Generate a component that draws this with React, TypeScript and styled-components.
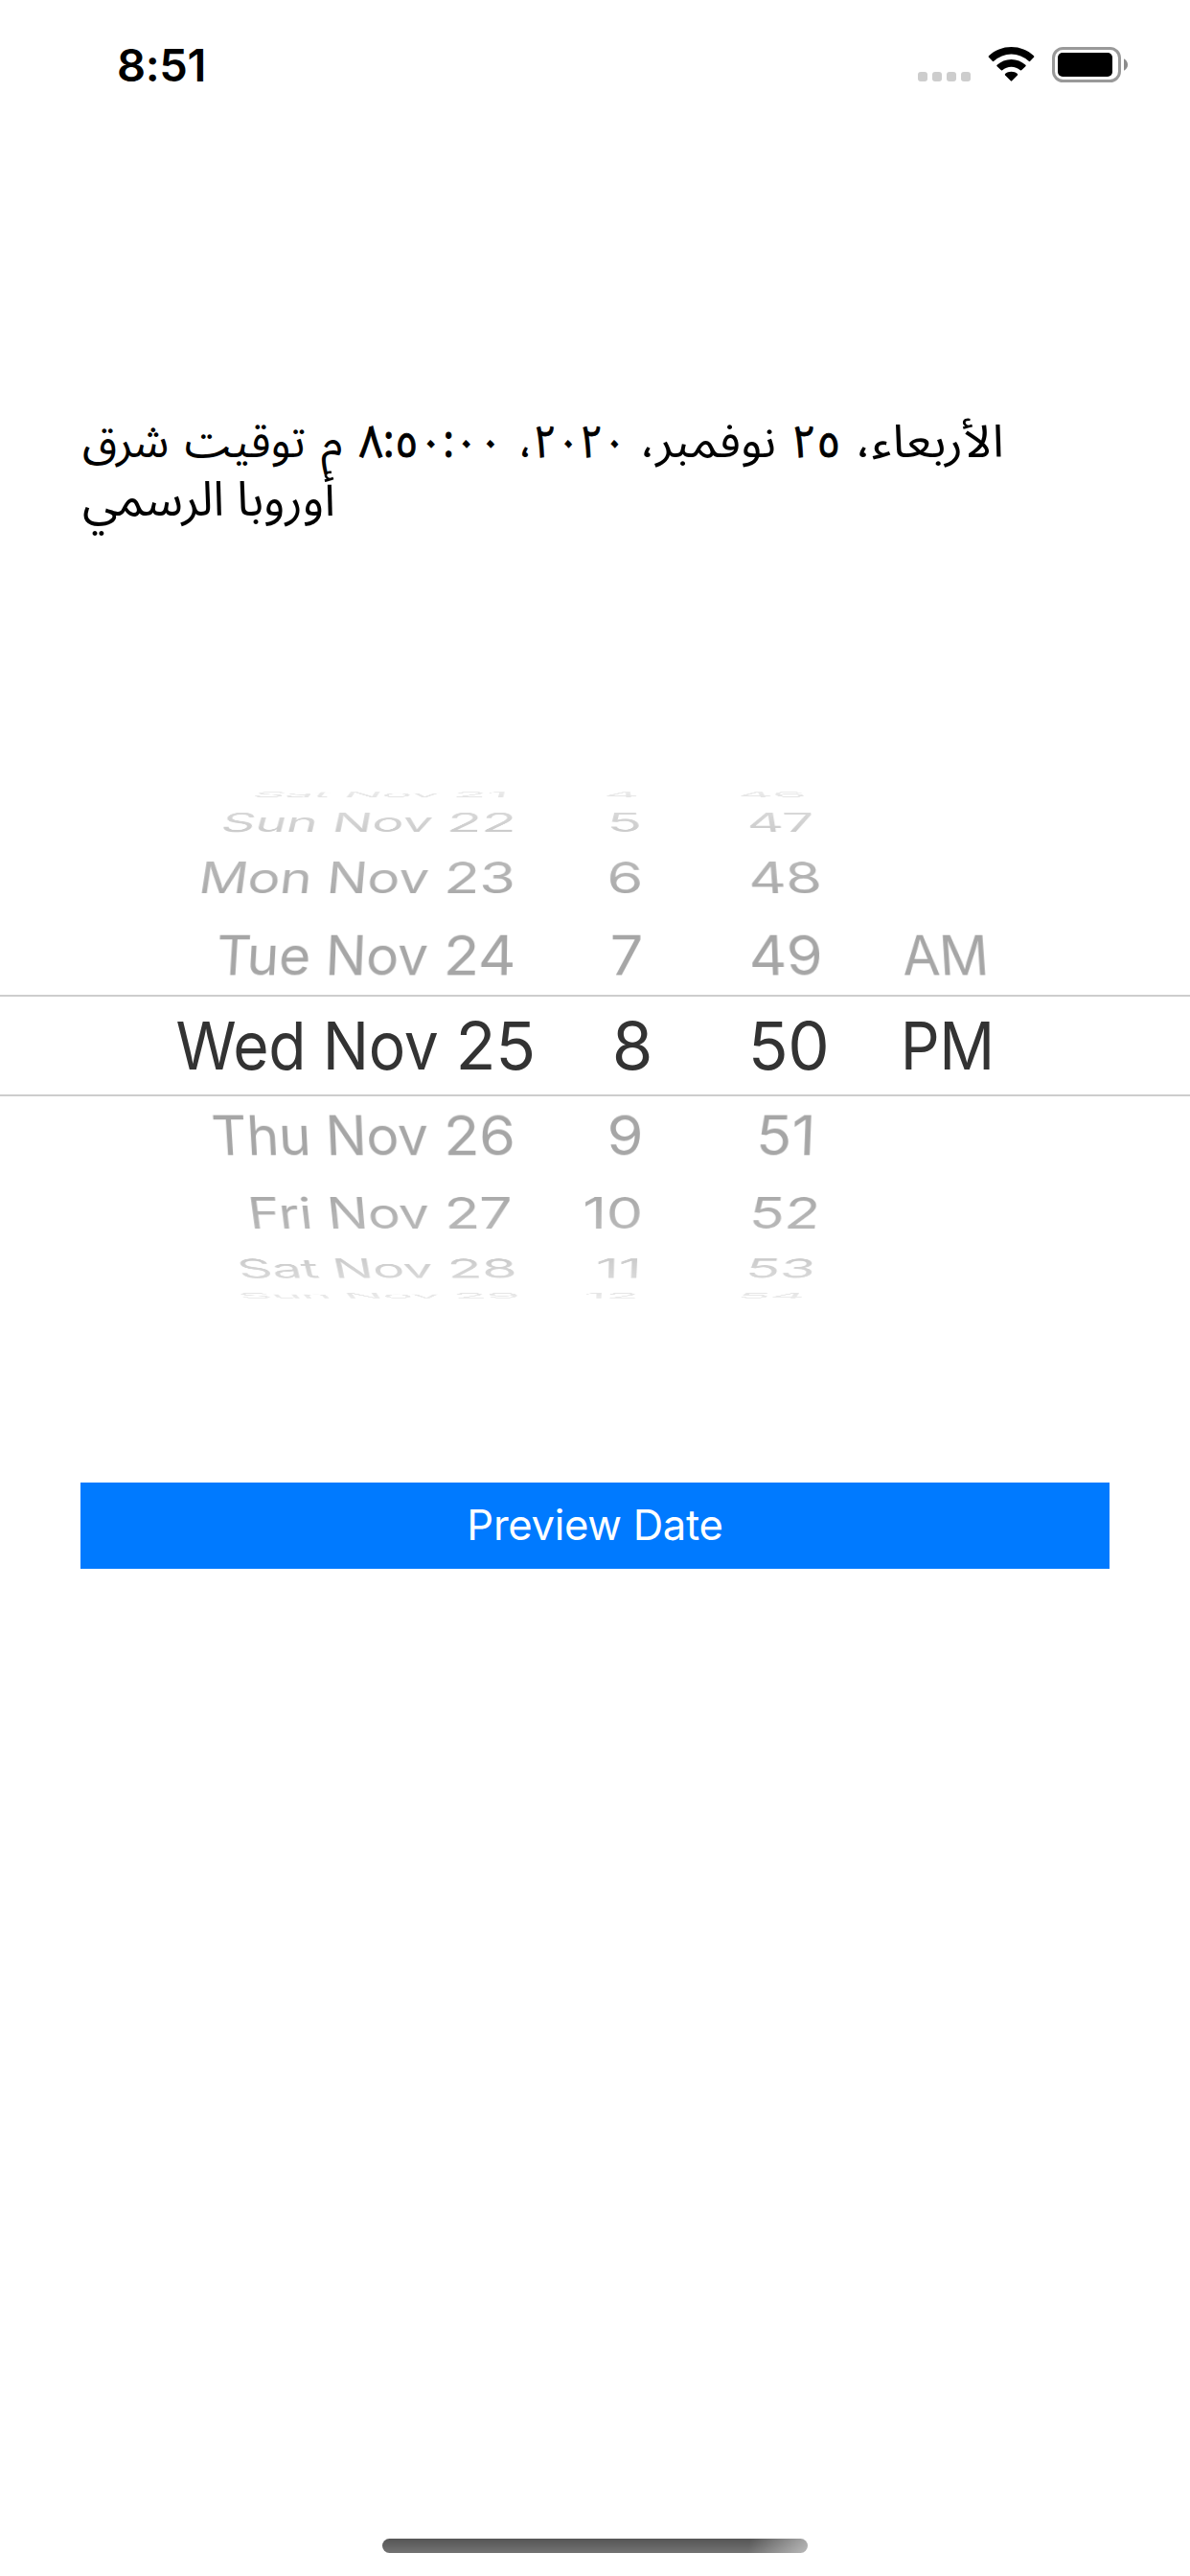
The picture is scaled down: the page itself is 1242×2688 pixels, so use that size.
import React from "react";
import styled, { createGlobalStyle } from "styled-components";

const GlobalStyle = createGlobalStyle`
  body { margin: 0; background: #fff; }
  *, *::before, *::after { box-sizing: border-box; }
`;

const Screen = styled.main`
  width: 1242px;
  height: 2688px;
  display: flex;
  flex-direction: column;
  overflow: hidden;
  background: #fff;
  color: #000;
  font-family: Inter, Roboto, "Liberation Sans", sans-serif;
`;

const StatusBar = styled.header`
  flex: none;
  height: 132px;
  padding: 49px 64px 0 122px;
  display: flex;
  justify-content: space-between;
  align-items: flex-start;
`;

const Clock = styled.time`
  font-size: 47px;
  font-weight: 600;
  line-height: 38px;
  letter-spacing: -0.4px;
`;

const StatusIcons = styled.div`
  display: flex;
  align-items: flex-start;
`;

const SignalDots = styled.div`
  display: flex;
  gap: 5px;
  margin: 26px 18px 0 0;
`;

const Dot = styled.i`
  width: 10px;
  height: 10px;
  border-radius: 3px;
  background: #cdcdcd;
`;

const WifiIcon = styled.svg`
  width: 49px;
  height: 37px;
  margin-right: 18px;
`;

const BatteryIcon = styled.svg`
  width: 80px;
  height: 38px;
`;

const DateLabel = styled.p`
  flex: none;
  height: 120px;
  margin: 300px 84px 0 86px;
  direction: rtl;
  text-align: left;
  white-space: nowrap;
  font-family: "Noto Sans Arabic", "DejaVu Sans", sans-serif;
`;

const LabelLine = styled.span<{ $size: number; $gap: number }>`
  display: block;
  height: 60px;
  font-size: ${(p) => p.$size}px;
  line-height: 60px;
  word-spacing: ${(p) => p.$gap}px;
`;

const Word = styled.span<{ $stretch: number; $space: number }>`
  display: inline-block;
  margin-left: ${(p) => p.$space}px;
  transform: scaleX(${(p) => p.$stretch});
  transform-origin: 100% 50%;
`;

const Digits = styled(Word)`
  -webkit-text-stroke: 0.8px #000;
`;

const Picker = styled.section`
  flex: none;
  height: 529px;
  margin-top: 274px;
  display: flex;
  flex-direction: column;
  overflow: hidden;
`;

const Wheel = styled.div<{ $fade: string }>`
  flex: none;
  display: flex;
  flex-direction: column;
  mask-image: linear-gradient(
    ${(p) => p.$fade},
    rgba(0, 0, 0, 0.22) 0,
    rgba(0, 0, 0, 0.3) 6px,
    rgba(0, 0, 0, 0.44) 22px,
    rgba(0, 0, 0, 0.58) 42px,
    rgba(0, 0, 0, 0.8) 74px,
    rgba(0, 0, 0, 0.95) 106px,
    #000 150px
  );
`;

const WheelRow = styled.div<{ $height: number; $shift: number; $angle: number; $scale: number }>`
  height: ${(p) => p.$height}px;
  display: grid;
  grid-template-columns: 538px 133px 64px 170px 162px;
  align-items: center;
  line-height: 0;
  font-size: 61.3px;
  letter-spacing: -0.4px;
  white-space: nowrap;
  color: #a6a6a6;
  transform-origin: 610px 50%;
  transform: translateY(${(p) => p.$shift}px) scaleX(${(p) => p.$scale}) perspective(2400px)
    rotateX(${(p) => p.$angle}deg);
`;

const SelectedRow = styled.div`
  flex: none;
  height: 106px;
  display: grid;
  grid-template-columns: 560px 121px 57px 170px 162px;
  align-items: center;
  border-top: 2px solid #cdcdcd;
  border-bottom: 2px solid #cdcdcd;
  font-size: 69px;
  line-height: 1;
  letter-spacing: -0.4px;
  white-space: nowrap;
  color: #333;
`;

const DateCell = styled.span`
  display: flex;
  justify-content: flex-end;
  align-items: center;
  gap: 0.26em;
`;

const DayName = styled.span`
  transform: scaleX(0.93);
  transform-origin: 100% 50%;
`;

const DayNumber = styled.span`
  width: 1.225em;
`;

const HourCell = styled.span`
  justify-self: end;
`;

const MinuteCell = styled.span`
  grid-column: 4;
  justify-self: center;
`;

const PeriodCell = styled.span`
  grid-column: 5;
  justify-self: center;
  transform: scaleX(0.93);
`;

const PreviewButton = styled.button`
  flex: none;
  height: 90px;
  margin: 192px 84px 0;
  padding: 0;
  border: 0;
  background: #007aff;
  color: #fff;
  font: 400 43.6px/90px Inter, Roboto, sans-serif;
  letter-spacing: -0.3px;
`;

const HomeIndicator = styled.div`
  flex: none;
  width: 444px;
  height: 15px;
  margin: auto auto 24px 399px;
  border-radius: 8px;
  background: linear-gradient(100deg, rgba(255, 255, 255, 0) 86%, rgba(255, 255, 255, 0.5) 100%),
    linear-gradient(#555, #737373);
`;

type Row = {
  day: string;
  number: string;
  hour: string;
  minute: string;
  period?: string;
};

type TiltedRow = Row & {
  height: number;
  shift: number;
  angle: number;
  scale: number;
};

const rowsAbove: TiltedRow[] = [
  { day: "Sat Nov", number: "21", hour: "4", minute: "46", height: 14, shift: -4, angle: 82.4, scale: 0.93 },
  { day: "Sun Nov", number: "22", hour: "5", minute: "47", height: 36, shift: 0, angle: 63.3, scale: 0.975 },
  { day: "Mon Nov", number: "23", hour: "6", minute: "48", height: 79, shift: 0, angle: 43, scale: 0.995 },
  { day: "Tue Nov", number: "24", hour: "7", minute: "49", period: "AM", height: 83, shift: 0, angle: 22, scale: 1 },
];

const selected: Row = { day: "Wed Nov", number: "25", hour: "8", minute: "50", period: "PM" };

const rowsBelow: TiltedRow[] = [
  { day: "Thu Nov", number: "26", hour: "9", minute: "51", height: 82, shift: 0, angle: -22, scale: 1 },
  { day: "Fri Nov", number: "27", hour: "10", minute: "52", height: 80, shift: 0, angle: -43, scale: 0.995 },
  { day: "Sat Nov", number: "28", hour: "11", minute: "53", height: 35, shift: 0, angle: -63.3, scale: 0.975 },
  { day: "Sun Nov", number: "29", hour: "12", minute: "54", height: 14, shift: 4, angle: -82.4, scale: 0.93 },
];

function Cells({ row }: { row: Row }) {
  return (
    <>
      <DateCell>
        <DayName>{row.day}</DayName>
        <DayNumber>{row.number}</DayNumber>
      </DateCell>
      <HourCell>{row.hour}</HourCell>
      <MinuteCell>{row.minute}</MinuteCell>
      {row.period && <PeriodCell>{row.period}</PeriodCell>}
    </>
  );
}

function Rows({ rows }: { rows: TiltedRow[] }) {
  return (
    <>
      {rows.map((row) => (
        <WheelRow
          key={row.number}
          $height={row.height}
          $shift={row.shift}
          $angle={row.angle}
          $scale={row.scale}
        >
          <Cells row={row} />
        </WheelRow>
      ))}
    </>
  );
}

export default function App() {
  return (
    <Screen>
      <GlobalStyle />
      <StatusBar>
        <Clock>8:51</Clock>
        <StatusIcons>
          <SignalDots>
            <Dot />
            <Dot />
            <Dot />
            <Dot />
          </SignalDots>
          <WifiIcon viewBox="0 0 49 37">
            <path d="M24.5 0C33.5 0 41.8 3.4 48 9.2Q48.7 10 48 10.8L44.2 14.8Q43.5 15.5 42.7 14.8A26.6 26.6 0 0 0 6.3 14.8Q5.5 15.5 4.8 14.8L1 10.8Q.3 10 1 9.2C7.2 3.4 15.5 0 24.5 0Z" />
            <path d="M24.5 12.9C30.2 12.9 35.4 15.1 39.4 18.7Q40.2 19.4 39.4 20.2L35.4 24.1Q34.6 24.9 33.8 24.2A14 14 0 0 0 15.2 24.2Q14.4 24.9 13.6 24.1L9.6 20.2Q8.8 19.4 9.6 18.7C13.6 15.1 18.8 12.9 24.5 12.9Z" />
            <path d="M24.5 25.7C27 25.7 29.2 26.6 30.9 28Q31.6 28.7 30.9 29.5L25.2 35.3Q24.5 36 23.8 35.3L18.1 29.5Q17.4 28.7 18.1 28C19.8 26.6 22 25.7 24.5 25.7Z" />
          </WifiIcon>
          <BatteryIcon viewBox="0 0 80 38">
            <rect x="1.5" y="1.5" width="69" height="34" rx="10" fill="none" stroke="#999" strokeWidth="3" />
            <rect x="6" y="6" width="57" height="25" rx="5" />
            <path d="M75 12.2Q79 14.5 79 18.5T75 24.8Z" fill="#8c8c8c" />
          </BatteryIcon>
        </StatusIcons>
      </StatusBar>
      <DateLabel lang="ar">
        <LabelLine $size={47} $gap={4}>
          <Word $stretch={1.11} $space={14}>الأربعاء،</Word>{" "}
          <Digits $stretch={0.96} $space={-2}>٢٥</Digits>{" "}
          <Word $stretch={1.07} $space={7}>نوفمبر،</Word>{" "}
          <Digits $stretch={0.9} $space={-10}>٢٠٢٠</Digits>،{" "}
          <Digits $stretch={0.94} $space={-9}>٨:٥٠:٠٠</Digits> م توقيت شرق
        </LabelLine>
        <LabelLine $size={50} $gap={0}>أوروبا الرسمي</LabelLine>
      </DateLabel>
      <Picker>
        <Wheel $fade="to bottom">
          <Rows rows={rowsAbove} />
        </Wheel>
        <SelectedRow>
          <Cells row={selected} />
        </SelectedRow>
        <Wheel $fade="to top">
          <Rows rows={rowsBelow} />
        </Wheel>
      </Picker>
      <PreviewButton type="button">Preview Date</PreviewButton>
      <HomeIndicator />
    </Screen>
  );
}
